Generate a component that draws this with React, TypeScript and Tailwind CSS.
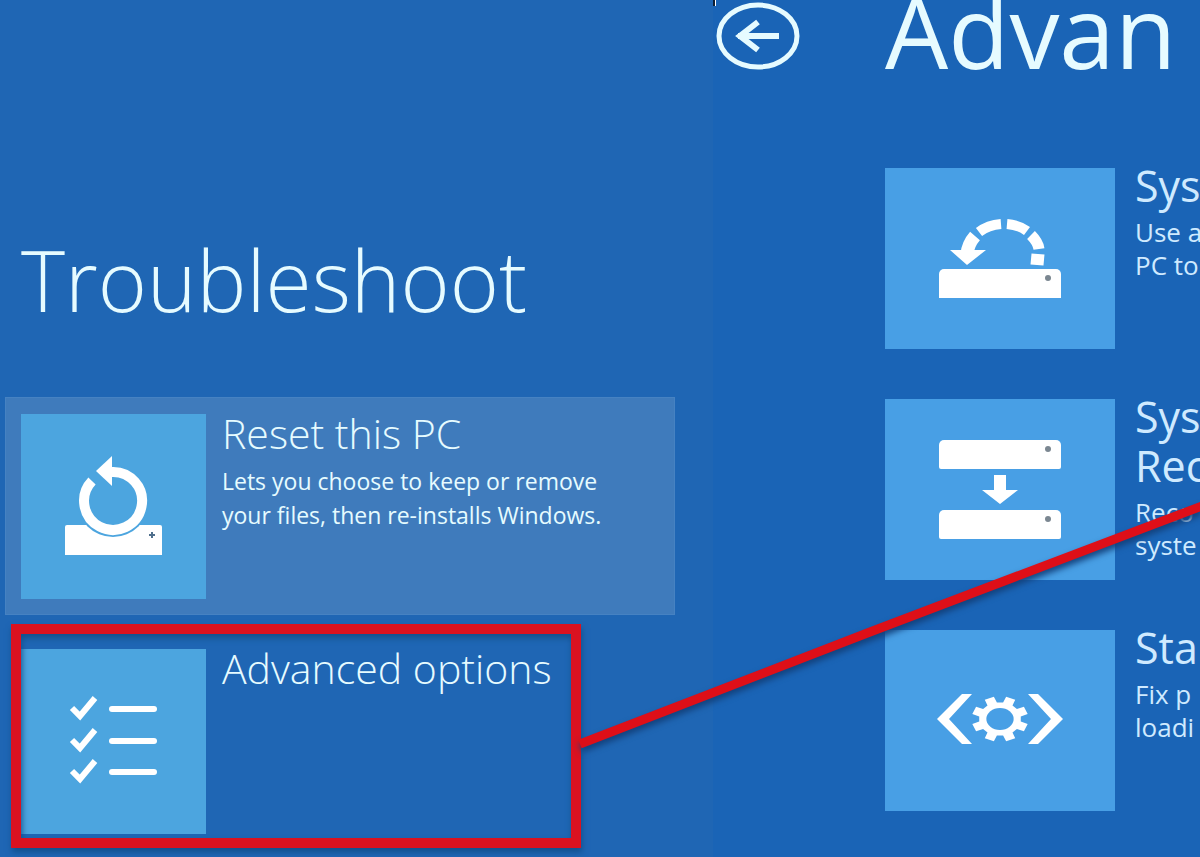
import type { ReactNode } from "react";

interface Option {
  title: string[];
  lines: string[];
  icon: ReactNode;
}

const ResetIcon = () => (
  <svg viewBox="0 0 185 185" className="h-full w-full" aria-hidden="true">
    <path d="M46 111h93a2 2 0 0 1 2 2v28H44v-28a2 2 0 0 1 2-2z" fill="#fff" />
    <circle cx="92" cy="87" r="36" fill="#4ca5df" />
    <path
      d="M71 67A29 29 0 1 0 90 58"
      fill="none"
      stroke="#fff"
      strokeWidth="10"
    />
    <path d="M75 57L91 42v30z" fill="#fff" />
    <path d="M131 118v6M128 121h6" stroke="#4f6f8c" strokeWidth="2" />
  </svg>
);

const ChecklistIcon = () => (
  <svg viewBox="0 0 185 185" className="h-full w-full" aria-hidden="true">
    {[60, 92, 123].map((y) => (
      <g key={y} fill="none" stroke="#fff">
        <path d={`M51 ${y - 1}l8 8 15-18`} strokeWidth="6" />
        <path d={`M91 ${y}h42`} strokeWidth="6" strokeLinecap="round" />
      </g>
    ))}
  </svg>
);

const RestoreIcon = () => (
  <svg viewBox="0 0 230 181" className="h-full w-full" aria-hidden="true">
    <path d="M59 101h112a5 5 0 0 1 5 5v24H54v-24a5 5 0 0 1 5-5z" fill="#fff" />
    <ellipse cx="163" cy="110" rx="3" ry="3" fill="#7b8791" />
    <g fill="none" stroke="#fff" strokeWidth="10">
      <path d="M82 86Q83 76 90 68" strokeWidth="13" />
      <path d="M94 64Q103 57 116 56" />
      <path d="M122 56Q134 57 142 63" />
      <path d="M146 67Q153 74 154 81" strokeWidth="11" />
      <path d="M153 86L152 97" strokeWidth="13" />
    </g>
    <path d="M65 82h12l5-3 7 3h12L82 97z" fill="#fff" />
  </svg>
);

const ImageRecoveryIcon = () => (
  <svg viewBox="0 0 230 181" className="h-full w-full" aria-hidden="true">
    {[41, 111].map((y) => (
      <g key={y}>
        <path
          d={`M59 ${y}h112a5 5 0 0 1 5 5v22a2 2 0 0 1-2 2H56a2 2 0 0 1-2-2v-22a5 5 0 0 1 5-5z`}
          fill="#fff"
        />
        <ellipse cx="163" cy={y + 9} rx="3" ry="3" fill="#7b8791" />
      </g>
    ))}
    <path d="M109 76h12v15h12l-18 14-18-14h12z" fill="#fff" />
  </svg>
);

// eight flat teeth round a ring
const gearPoints = Array.from({ length: 8 }, (_, i) =>
  [
    [-14, 20],
    [-10, 27],
    [10, 27],
    [14, 20],
  ].map(([offset, radius]) => {
    const angle = ((i * 45 + 22.5 + offset) * Math.PI) / 180;
    return `${Math.cos(angle) * radius},${Math.sin(angle) * radius}`;
  }),
)
  .flat()
  .join(" ");

const StartupIcon = () => (
  <svg viewBox="0 0 230 181" className="h-full w-full" aria-hidden="true">
    <path
      d="M77 64h10L64 89l23 25H77L52 89zM143 64h10l25 25-25 25h-10l23-25z"
      fill="#fff"
    />
    <g transform="translate(115 89) scale(1.05 0.84)">
      <polygon points={gearPoints} fill="#fff" />
      <circle r="13" fill="#489fe5" />
    </g>
  </svg>
);

const troubleshootItems: Option[] = [
  {
    title: ["Reset this PC"],
    lines: [
      "Lets you choose to keep or remove",
      "your files, then re-installs Windows.",
    ],
    icon: <ResetIcon />,
  },
  { title: ["Advanced options"], lines: [], icon: <ChecklistIcon /> },
];

const advancedItems: Option[] = [
  { title: ["Sys"], lines: ["Use a", "PC to"], icon: <RestoreIcon /> },
  {
    title: ["Sys", "Rec"],
    lines: ["Reco", "syste"],
    icon: <ImageRecoveryIcon />,
  },
  { title: ["Sta"], lines: ["Fix p", "loadi"], icon: <StartupIcon /> },
];

const App = () => {
  return (
    <div className="relative flex min-h-screen w-full overflow-hidden bg-[#1f66b4] font-['Open_Sans','Noto_Sans',sans-serif] text-[#e6fbff]">
      <main className="w-[713px] shrink-0 pl-[5px] pt-[230px]">
        <h1 className="pl-4 text-[84px] font-light leading-[100px]">
          Troubleshoot
        </h1>
        <div className="mt-[67px] flex flex-col gap-[17px]">
          {troubleshootItems.map((item, index) => (
            <button
              key={item.title[0]}
              type="button"
              className={
                index === 0
                  ? "relative flex w-[670px] items-start gap-4 bg-[#3f7bbc] pb-4 pl-4 pt-3 text-left outline-1 -outline-offset-1 outline-[#4682c2]"
                  : "relative flex w-[670px] items-start gap-4 pb-4 pl-4 pt-3 text-left"
              }
            >
              <span className="mt-[5px] block size-[185px] shrink-0 bg-[#4ca5df]">
                {item.icon}
              </span>
              <span className="block whitespace-nowrap">
                <span className="block text-[41px] font-light leading-[48px]">
                  {item.title[0]}
                </span>
                {item.lines.length > 0 && (
                  <span className="mt-[7px] block text-[23px] leading-[34px]">
                    {item.lines.map((line) => (
                      <span key={line} className="block">
                        {line}
                      </span>
                    ))}
                  </span>
                )}
              </span>
              {index === 1 && (
                <span className="absolute -top-2 left-[6px] h-[224px] w-[570px] border-10 border-[#da1220] shadow-[1px_4px_6px_#12508c,inset_1px_4px_6px_#12508c]" />
              )}
            </button>
          ))}
        </div>
      </main>

      <section className="relative min-w-0 flex-1 overflow-hidden bg-[#1a64b6]">
        <span className="absolute left-0 top-0 h-[6px] w-[3px] border-r border-white bg-[#0b1d33]" />
        <header className="flex h-16">
          <button
            type="button"
            aria-label="Back"
            className="ml-[3px] mt-[2px] h-[68px] w-[84px] shrink-0"
          >
            <svg viewBox="0 0 84 68" className="h-full w-full">
              <g fill="none" stroke="#e6fbff">
                <ellipse cx="42" cy="34" rx="39" ry="31" strokeWidth="5" />
                <path d="M22 34h41" strokeWidth="6" />
                <path d="M42 20L24 34l18 14" strokeWidth="6" />
              </g>
            </svg>
          </button>
          <h2 className="ml-[85px] whitespace-nowrap text-[100px] font-normal leading-[60px]">
            Advan
          </h2>
        </header>
        <div className="mt-[97px] flex flex-col gap-[43px] pl-[172px]">
          {advancedItems.map((item) => (
            <button
              key={item.lines[0]}
              type="button"
              className="flex items-start gap-5 text-left"
            >
              <span className="mt-[7px] block h-[181px] w-[230px] shrink-0 bg-[#489fe5]">
                {item.icon}
              </span>
              <span className="block whitespace-nowrap text-[#cfeaff]">
                {item.title.map((line) => (
                  <span
                    key={line}
                    className="block text-[43px] font-normal leading-[49px]"
                  >
                    {line}
                  </span>
                ))}
                <span className="mt-[6px] block text-[26px] leading-[33px]">
                  {item.lines.map((line) => (
                    <span key={line} className="block">
                      {line}
                    </span>
                  ))}
                </span>
              </span>
            </button>
          ))}
        </div>
      </section>

      {/* callout line from the highlighted option */}
      <svg
        className="pointer-events-none absolute inset-0 h-full w-full drop-shadow-[1px_4px_3px_#12407a]"
        aria-hidden="true"
      >
        <path
          d="M580 744L870 632 1210 503"
          fill="none"
          stroke="#de0f18"
          strokeWidth="9"
        />
      </svg>
    </div>
  );
};

export default App;
